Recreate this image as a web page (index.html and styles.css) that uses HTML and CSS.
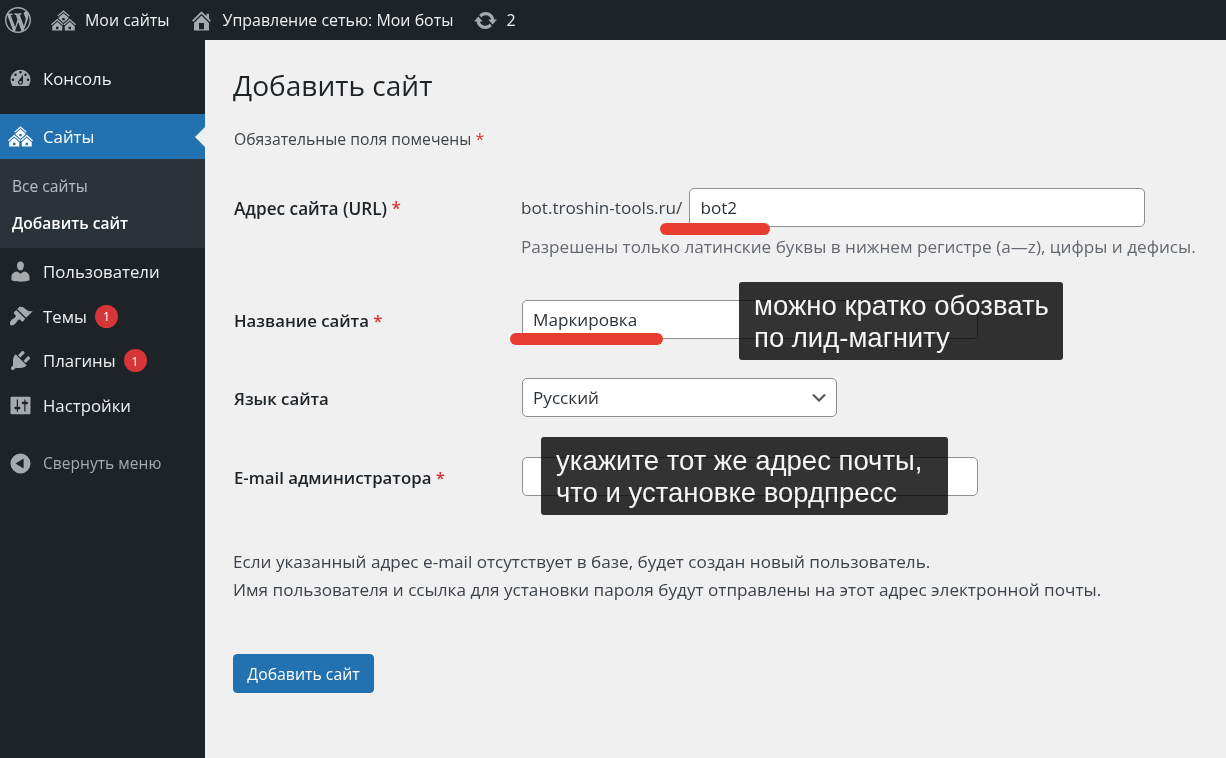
FILE: index.html
```html
<!DOCTYPE html>
<html lang="ru">
<head>
    <meta charset="UTF-8">
    <meta name="viewport" content="width=device-width, initial-scale=1.0">
    <title>Добавить сайт</title>
    <link rel="stylesheet" href="styles.css">
</head>
<body>

    <div class="adminbar">
        <svg class="bar-icon logo" viewBox="0 0 20 20"><path d="M20 10c0-5.51-4.49-10-10-10C4.48 0 0 4.49 0 10c0 5.52 4.48 10 10 10 5.51 0 10-4.48 10-10zM7.78 15.37L4.37 6.22c.55-.02 1.17-.08 1.17-.08.5-.06.44-1.13-.06-1.11 0 0-1.45.11-2.37.11-.18 0-.37 0-.58-.01C4.12 2.69 6.87 1.11 10 1.11c2.33 0 4.45.87 6.05 2.34-.68-.11-1.65.39-1.65 1.58 0 .74.45 1.36.9 2.1.35.61.55 1.36.55 2.46 0 1.49-1.4 5-1.4 5l-3.03-8.37c.54-.02.82-.17.82-.17.5-.05.44-1.25-.06-1.22 0 0-1.44.12-2.38.12-.87 0-2.33-.12-2.33-.12-.5-.03-.56 1.2-.06 1.22l.92.08 1.26 3.41zM17.41 10c.24-.64.74-1.87.43-4.25.7 1.29 1.05 2.71 1.05 4.25 0 3.29-1.73 6.24-4.4 7.78.97-2.59 1.94-5.2 2.92-7.78zM6.1 18.09C3.12 16.65 1.11 13.53 1.11 10c0-1.3.23-2.48.72-3.59C3.25 10.3 4.67 14.2 6.1 18.09zm4.03-6.63l2.58 6.98c-.86.29-1.76.45-2.71.45-.79 0-1.57-.11-2.29-.33.81-2.38 1.62-4.74 2.42-7.1z"/></svg>
        <div class="bar-item sites">
            <svg class="bar-icon" viewBox="0 0 20 20"><path d="M14.27 6.87L10 3.14 5.73 6.87 5 6.14l5-4.38 5 4.38zM14 8.42l-4.05 3.43L6 8.38v-.74l4-3.5 4 3.5v.78zM11 9.7V8H9v1.7h2zm-1.73 4.03L5 10 .73 13.73 0 13l5-4.38L10 13zm10 0L15 10l-4.27 3.73L10 13l5-4.38L20 13zM5 11l4 3.5V18H1v-3.5zm10 0l4 3.5V18h-8v-3.5zM6 17v-2H4v2h2zm10 0v-2h-2v2h2z"/></svg>
            <span>Мои сайты</span>
        </div>
        <div class="bar-item network">
            <svg class="bar-icon" viewBox="0 0 20 20"><path d="M16 8.5l1.53 1.53-1.06 1.06L10 4.62l-6.47 6.47-1.06-1.06L10 2.5l4 4v-2h2v4zm-6-2.46l6 5.99V18H4v-5.97zM12 17v-5H8v5h4z"/></svg>
            <span>Управление сетью: Мои боты</span>
        </div>
        <div class="bar-item updates">
            <svg class="bar-icon" viewBox="0 0 20 20"><path d="M10.2 3.28c3.53 0 6.43 2.61 6.92 6h2.08l-3.5 4-3.5-4h2.32c-.45-1.97-2.21-3.45-4.32-3.45-1.45 0-2.73.71-3.54 1.78L4.95 5.66C6.23 4.2 8.11 3.28 10.2 3.28zm-.4 13.44c-3.52 0-6.43-2.61-6.92-6H.8l3.5-4c1.17 1.33 2.33 2.67 3.5 4H5.48c.45 1.97 2.21 3.45 4.32 3.45 1.45 0 2.73-.71 3.54-1.78l1.71 1.95c-1.28 1.46-3.15 2.38-5.25 2.38z"/></svg>
            <span>2</span>
        </div>
    </div>

    <div class="wrap">
        <div class="sidebar">
            <div class="menu-item first">
                <svg class="menu-icon" viewBox="0 0 20 20"><path d="M3.76 16h12.48c1.1-1.37 1.76-3.11 1.76-5 0-4.42-3.58-8-8-8s-8 3.58-8 8c0 1.89.66 3.63 1.76 5zM10 4c.55 0 1 .45 1 1s-.45 1-1 1-1-.45-1-1 .45-1 1-1zM6 6c.55 0 1 .45 1 1s-.45 1-1 1-1-.45-1-1 .45-1 1-1zm8 0c.55 0 1 .45 1 1s-.45 1-1 1-1-.45-1-1 .45-1 1-1zm-5.37 5.55L12 7v6c0 1.1-.9 2-2 2s-2-.9-2-2c0-.57.24-1.08.63-1.45zM4 10c.55 0 1 .45 1 1s-.45 1-1 1-1-.45-1-1 .45-1 1-1zm12 0c.55 0 1 .45 1 1s-.45 1-1 1-1-.45-1-1 .45-1 1-1zm-5 3c0-.55-.45-1-1-1s-1 .45-1 1 .45 1 1 1 1-.45 1-1z"/></svg>
                <span>Консоль</span>
            </div>
            <div class="menu-item active">
                <svg class="menu-icon" viewBox="0 0 20 20"><path d="M14.27 6.87L10 3.14 5.73 6.87 5 6.14l5-4.38 5 4.38zM14 8.42l-4.05 3.43L6 8.38v-.74l4-3.5 4 3.5v.78zM11 9.7V8H9v1.7h2zm-1.73 4.03L5 10 .73 13.73 0 13l5-4.38L10 13zm10 0L15 10l-4.27 3.73L10 13l5-4.38L20 13zM5 11l4 3.5V18H1v-3.5zm10 0l4 3.5V18h-8v-3.5zM6 17v-2H4v2h2zm10 0v-2h-2v2h2z"/></svg>
                <span>Сайты</span>
            </div>
            <div class="submenu">
                <div class="sub-item">Все сайты</div>
                <div class="sub-item current">Добавить сайт</div>
            </div>
            <div class="menu-item">
                <svg class="menu-icon" viewBox="0 0 20 20"><path d="M10 9.25c-2.27 0-2.73-3.44-2.73-3.44C7 4.02 7.82 2 9.97 2c2.16 0 2.98 2.02 2.71 3.81 0 0-.41 3.44-2.68 3.44zm0 2.57L12.72 10c2.39 0 4.52 2.33 4.52 4.53v2.49s-3.65 1.13-7.24 1.13c-3.65 0-7.24-1.13-7.24-1.13v-2.49c0-2.25 1.94-4.48 4.47-4.48z"/></svg>
                <span>Пользователи</span>
            </div>
            <div class="menu-item">
                <svg class="menu-icon" viewBox="0 0 20 20"><path d="M14.48 11.06L7.41 3.99l1.5-1.5c.5-.56 2.3-.47 3.51.32 1.21.8 1.43 1.28 2.91 2.1 1.18.64 2.45 1.26 4.45.85zm-.71.71L6.7 4.7 4.93 6.47c-.39.39-.39 1.02 0 1.41l1.06 1.06c.39.39.39 1.03 0 1.42-.6.6-1.43 1.11-2.21 1.69-.35.26-.7.53-1.01.84-1.43 1.43-1.4 3.4-.9 3.9.5.5 2.47.53 3.9-.9.31-.31.58-.66.84-1.01.58-.78 1.09-1.61 1.69-2.21.39-.39 1.03-.39 1.42 0l1.06 1.06c.39.39 1.02.39 1.41 0z"/></svg>
                <span>Темы</span>
                <span class="badge">1</span>
            </div>
            <div class="menu-item">
                <svg class="menu-icon" viewBox="0 0 20 20"><path d="M13.11 4.36L9.87 7.6 8 5.73l3.24-3.24c.35-.34 1.05-.2 1.56.32.52.51.66 1.21.31 1.55zm-8 1.77l.91-1.12 9.01 9.01-1.19.84c-.71.71-2.63 1.16-3.82 1.16H6.14L4.9 17.26c-.59.59-1.54.59-2.12 0-.59-.58-.59-1.53 0-2.12l1.24-1.24v-3.88c0-1.13.4-3.19 1.09-3.89zm7.26 3.97l3.24-3.24c.34-.35 1.04-.21 1.55.31.52.51.66 1.21.31 1.55l-3.24 3.25z"/></svg>
                <span>Плагины</span>
                <span class="badge">1</span>
            </div>
            <div class="menu-item">
                <svg class="menu-icon" viewBox="0 0 20 20"><path fill-rule="evenodd" d="M18 16V4c0-.55-.45-1-1-1H3c-.55 0-1 .45-1 1v12c0 .55.45 1 1 1h14c.55 0 1-.45 1-1zM8 11h1c.55 0 1 .45 1 1s-.45 1-1 1H8v1.5c0 .28-.22.5-.5.5s-.5-.22-.5-.5V13H6c-.55 0-1-.45-1-1s.45-1 1-1h1V5.5c0-.28.22-.5.5-.5s.5.22.5.5V11zm5-2h-1c-.55 0-1-.45-1-1s.45-1 1-1h1V5.5c0-.28.22-.5.5-.5s.5.22.5.5V7h1c.55 0 1 .45 1 1s-.45 1-1 1h-1v5.5c0 .28-.22.5-.5.5s-.5-.22-.5-.5V9z"/></svg>
                <span>Настройки</span>
            </div>
            <div class="menu-item collapse">
                <svg class="menu-icon" viewBox="0 0 20 20"><path fill-rule="evenodd" d="M10 2a8 8 0 1 0 0 16 8 8 0 0 0 0-16zm2.5 4v8L6 10z"/></svg>
                <span>Свернуть меню</span>
            </div>
        </div>

        <div class="content">
            <h1 class="title">Добавить сайт</h1>
            <p class="required-note">Обязательные поля помечены <span class="star">*</span></p>

            <div class="form">
                <div class="row row-url">
                    <div class="label">Адрес сайта (URL) <span class="star">*</span></div>
                    <div class="field">
                        <div class="url-line">
                            <span>bot.troshin-tools.ru/</span>
                            <input type="text" class="input input-url" value="bot2">
                        </div>
                        <div class="hint">Разрешены только латинские буквы в нижнем регистре (а—z), цифры и дефисы.</div>
                    </div>
                </div>
                <div class="row row-name">
                    <div class="label">Название сайта <span class="star">*</span></div>
                    <div class="field"><input type="text" class="input" value="Маркировка"></div>
                </div>
                <div class="row row-lang">
                    <div class="label">Язык сайта</div>
                    <div class="field">
                        <select class="input select"><option>Русский</option></select>
                    </div>
                </div>
                <div class="row row-email">
                    <div class="label">E-mail администратора <span class="star">*</span></div>
                    <div class="field"><input type="text" class="input" value=""></div>
                </div>
            </div>

            <p class="info">Если указанный адрес e-mail отсутствует в базе, будет создан новый пользователь.<br>Имя пользователя и ссылка для установки пароля будут отправлены на этот адрес электронной почты.</p>

            <button class="button">Добавить сайт</button>
        </div>
    </div>

    <!-- пометки поверх скриншота -->
    <div class="mark mark-url"></div>
    <div class="mark mark-name"></div>
    <div class="callout callout-name"><span class="callout-text">можно кратко обозвать<br>по лид-магниту</span></div>
    <div class="callout callout-email"><span class="callout-text">укажите тот же адрес почты,<br>что и установке вордпресс</span></div>

</body>
</html>
```

FILE: styles.css
```css
* {
    box-sizing: border-box;
}
html, body {
    height: 100%;
}
body {
    margin: 0;
    position: relative;
    overflow: hidden;
    font-family: "Open Sans", "Noto Sans", sans-serif;
    font-size: 17.15px;
    color: #3c434a;
    background-color: #f0f0f1;
}

/* admin bar */
.adminbar {
    height: 40px;
    background-color: #1d2327;
    color: #f0f0f1;
    display: flex;
    align-items: center;
    font-size: 15.95px;
}
.bar-icon {
    width: 25px;
    height: 25px;
    fill: #a7aaad;
    flex-shrink: 0;
}
.logo {
    width: 26px;
    height: 26px;
    margin-left: 5px;
}
.bar-item {
    display: flex;
    align-items: center;
    gap: 9px;
}
.sites {
    margin-left: 20px;
}
.network {
    margin-left: 19px;
}
.updates {
    margin-left: 20px;
    gap: 8px;
}

.wrap {
    display: flex;
    height: 718px;
}

/* left menu */
.sidebar {
    width: 205px;
    flex-shrink: 0;
    background-color: #1d2327;
    padding-top: 16px;
}
.menu-item {
    height: 44.8px;
    display: flex;
    align-items: center;
    color: #f0f0f1;
    font-size: 16.8px;
    padding-left: 8px;
    position: relative;
}
.menu-icon {
    width: 25px;
    height: 25px;
    fill: #a7aaad;
    margin-right: 10px;
    flex-shrink: 0;
}
.menu-item.first {
    height: 45px;
    margin-bottom: 13px;
}
.menu-item.active {
    height: 45px;
    background-color: #2271b1;
    color: #fff;
}
.menu-item.active .menu-icon {
    fill: #fff;
}
.menu-item.active::after {
    content: "";
    position: absolute;
    right: 0;
    top: 13px;
    border: 10px solid transparent;
    border-right-color: #f0f0f1;
    border-left-width: 0;
}
.submenu {
    background-color: #2c3338;
    padding: 8px 0 7px;
    margin-bottom: 1px;
}
.sub-item {
    height: 37px;
    display: flex;
    align-items: center;
    padding-left: 12px;
    font-size: 15.6px;
    color: rgba(240, 246, 252, 0.7);
}
.sub-item.current {
    color: #fff;
    font-weight: 600;
}
.badge {
    width: 23px;
    height: 23px;
    border-radius: 50%;
    background-color: #d63638;
    color: #fff;
    font-size: 13px;
    display: flex;
    align-items: center;
    justify-content: center;
    margin-left: 8px;
}
.menu-item.collapse {
    margin-top: 12.5px;
    color: #a7aaad;
    font-size: 15.6px;
}

/* main area */
.content {
    flex: 1;
    padding-left: 28px;
}
.title {
    margin: 25px 0 0;
    font-size: 28.05px;
    font-weight: 400;
    line-height: 40px;
    color: #1d2327;
}
.required-note {
    margin: 22px 0 0;
    padding-left: 1px;
    font-size: 15.75px;
    line-height: 24px;
}
.star {
    color: #d63638;
}
.form {
    margin-top: 37px;
}
.row {
    display: flex;
}
.label {
    width: 289px;
    height: 39px;
    padding: 1px 0 0 1px;
    flex-shrink: 0;
    font-size: 16.8px;
    font-weight: 600;
    color: #1d2327;
    line-height: 39px;
}
.row-url .label {
    font-size: 17.2px;
}
.field {
    flex: 1;
}
.url-line {
    display: flex;
    align-items: center;
    gap: 7px;
    margin-left: -1px;
}
.input {
    display: block;
    width: 456px;
    height: 39px;
    padding: 0 10px;
    font-family: inherit;
    font-size: 17.15px;
    color: #2c3338;
    background-color: #fff;
    border: 1px solid #8c8f94;
    border-radius: 5px;
}
.select {
    width: 315px;
    appearance: none;
    background-image: url("data:image/svg+xml,%3Csvg xmlns='http://www.w3.org/2000/svg' viewBox='0 0 20 20'%3E%3Cpath d='M5 6l5 5 5-5 2 1-7 7-7-7z' fill='%23555'/%3E%3C/svg%3E");
    background-repeat: no-repeat;
    background-position: right 7px center;
    background-size: 20px 20px;
}
.hint {
    margin-top: 8px;
    margin-left: -1px;
    line-height: 24px;
    color: #646970;
}
.row-name {
    margin-top: 41px;
}
.row-lang {
    margin-top: 39px;
}
.row-email {
    margin-top: 40px;
}
.info {
    margin: 52px 0 0;
    line-height: 28px;
}
.button {
    display: block;
    margin-top: 50px;
    width: 141px;
    height: 39px;
    padding: 0;
    font-family: inherit;
    font-size: 15.8px;
    color: #fff;
    background-color: #2271b1;
    border: 1px solid #2271b1;
    border-radius: 4px;
}

/* annotations on top of the screenshot */
.mark {
    position: absolute;
    height: 12px;
    border-radius: 6px;
    background-color: #e83c30;
}
.mark-url {
    left: 660px;
    top: 223px;
    width: 110px;
}
.mark-name {
    left: 510px;
    top: 333px;
    width: 153px;
}
.callout {
    position: absolute;
    padding: 8px 15px;
    color: #f5f5f5;
    font-family: "Liberation Sans", Arial, sans-serif;
    font-size: 27.5px;
    line-height: 32px;
}
/* multiply lets the field borders show through, as in the reference */
.callout::before {
    content: "";
    position: absolute;
    inset: 0;
    border-radius: 3px;
    background-color: #333;
    mix-blend-mode: multiply;
}
.callout-text {
    position: relative;
    display: block;
    white-space: nowrap;
}
.callout-name {
    left: 739px;
    top: 282px;
    width: 324px;
    height: 78px;
}
.callout-email {
    left: 541px;
    top: 437px;
    width: 407px;
    height: 78px;
}
```
